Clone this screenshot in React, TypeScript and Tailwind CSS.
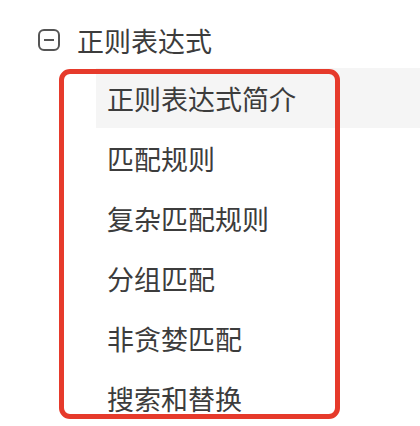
import React from "react";

const items = ["正则表达式简介", "匹配规则", "复杂匹配规则", "分组匹配", "非贪婪匹配", "搜索和替换"];

export default function App() {
  return (
    <div
      className="relative w-[420px] h-[426px] bg-white overflow-hidden"
      style={{ fontFamily: '"Noto Sans CJK SC", "Noto Sans", sans-serif' }}
    >
      <div className="flex items-center h-[68px] pt-[12px] pl-[38px]">
        <svg width="22" height="22" viewBox="0 0 22 22" className="shrink-0">
          <rect x="1" y="1" width="20" height="20" rx="5" fill="none" stroke="#555" strokeWidth="2" />
          <line x1="6" y1="11" x2="16" y2="11" stroke="#555" strokeWidth="2" />
        </svg>
        <span className="ml-[17px] text-[27px] leading-none text-[#3c3c3c]">正则表达式</span>
      </div>
      <div className="ml-[96px] flex flex-col">
        {items.map((t, i) => (
          <div
            key={t}
            className={`flex items-center h-[60px] pl-[11px] text-[27px] leading-none text-[#3c3c3c] ${i === 0 ? "bg-[#f5f5f5]" : ""}`}
          >
            {t}
          </div>
        ))}
      </div>
      <div className="absolute left-[59px] top-[69px] w-[281px] h-[350px] border-[5px] border-[#e63a2b] rounded-[11px]" />
    </div>
  );
}
